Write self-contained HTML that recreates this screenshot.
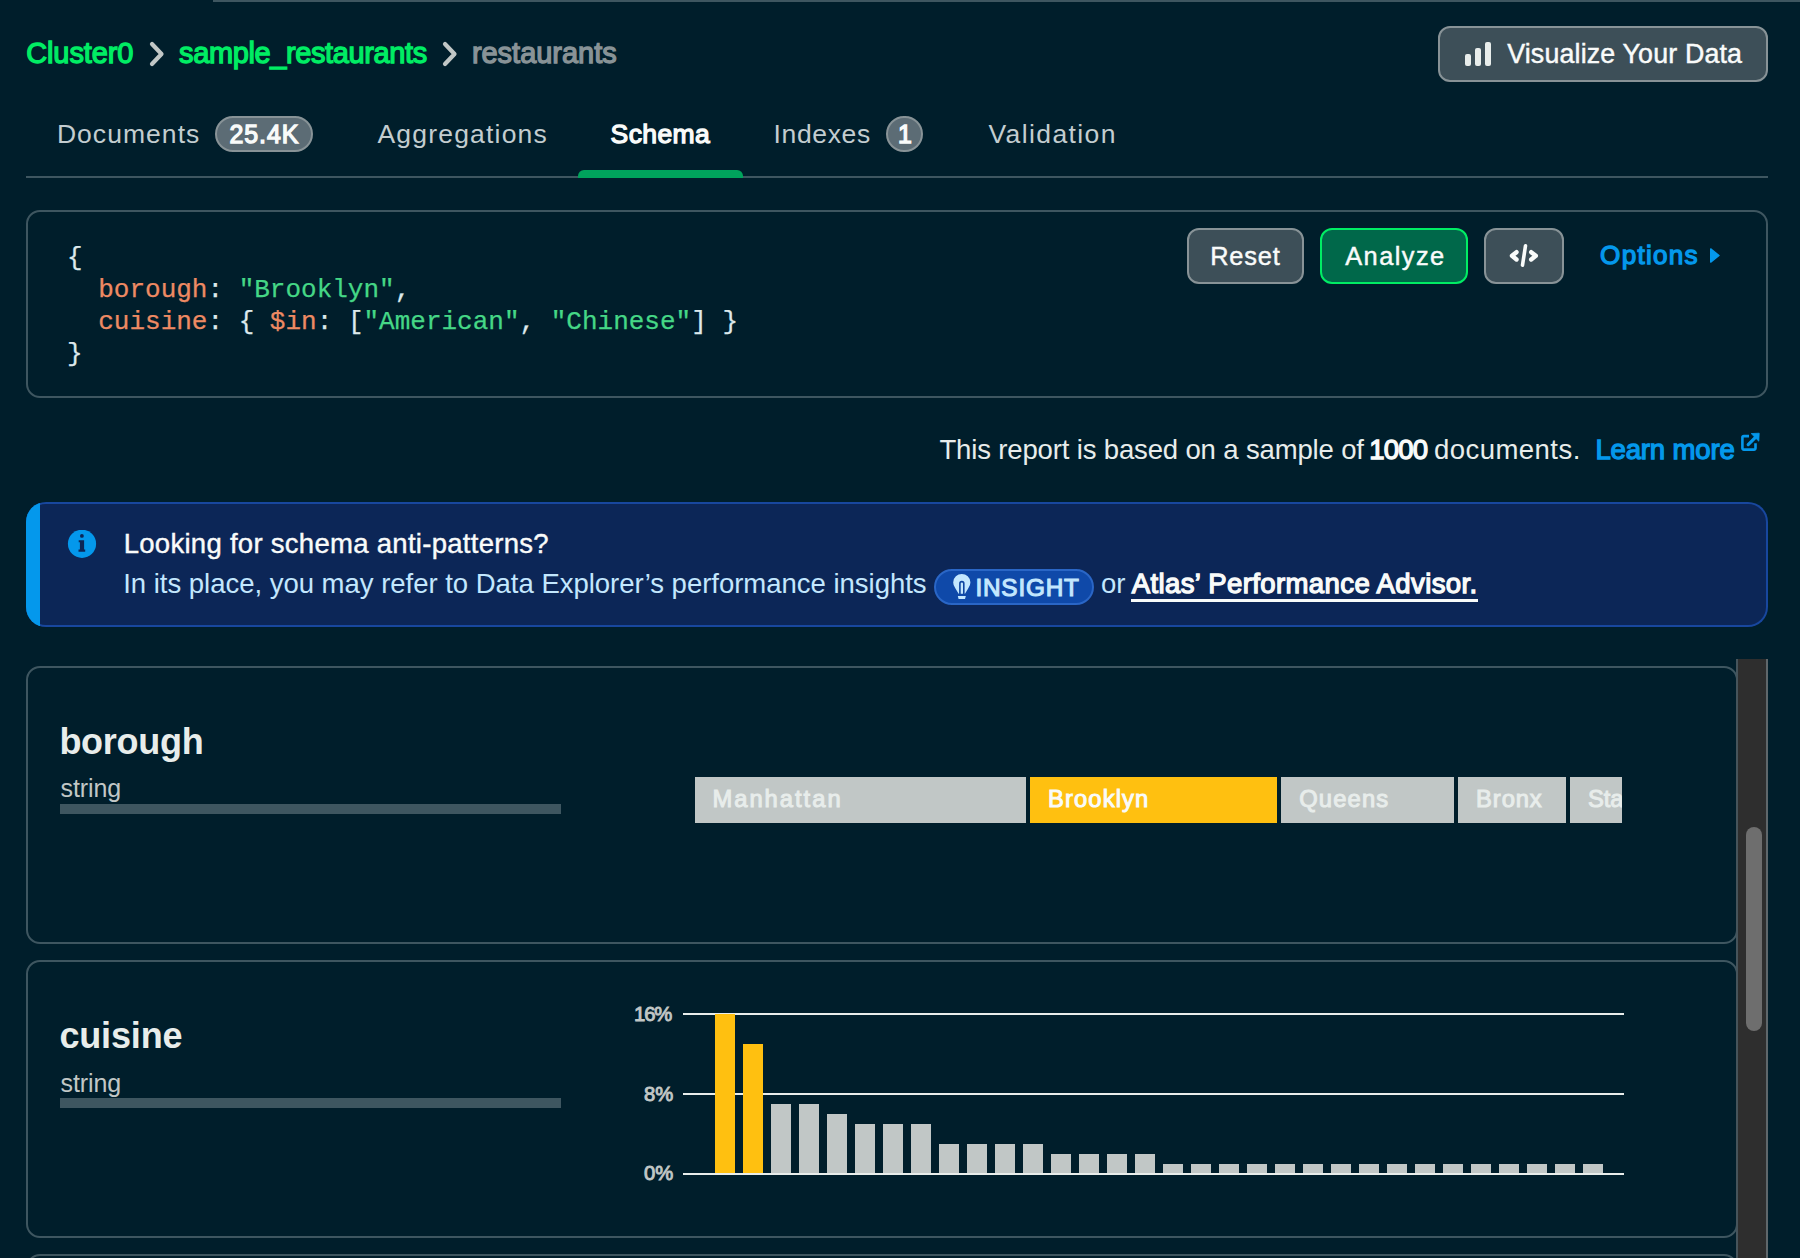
<!DOCTYPE html>
<html><head><meta charset="utf-8">
<style>
html,body{margin:0;padding:0}
body{width:1800px;height:1258px;overflow:hidden;background:#001E2B;position:relative;font-family:"Liberation Sans",sans-serif}
.a{position:absolute;box-sizing:border-box}
.t{position:absolute;white-space:pre;font-family:"Liberation Sans",sans-serif}
.code{position:absolute;white-space:pre;font-family:"Liberation Mono",monospace;font-size:26px;line-height:32px;color:#DDE9EC;-webkit-text-stroke:0.25px currentColor}
.k{color:#EE8A63}.s{color:#45D786}
.bar{position:absolute;width:20px;background:#C1C7C6;bottom:85px}
.y{background:#FFC010}
</style></head><body>
<!-- top line -->
<div class="a" style="left:213px;top:0;width:1587px;height:2px;background:#3E5660"></div>

<!-- breadcrumb chevrons -->
<svg class="a" style="left:146px;top:38px" width="22" height="32" viewBox="0 0 22 32"><path d="M6 6 L15.5 16 L6 26" fill="none" stroke="#C1C7C6" stroke-width="4.2" stroke-linecap="round" stroke-linejoin="round"/></svg>
<svg class="a" style="left:439px;top:38px" width="22" height="32" viewBox="0 0 22 32"><path d="M6 6 L15.5 16 L6 26" fill="none" stroke="#C1C7C6" stroke-width="4.2" stroke-linecap="round" stroke-linejoin="round"/></svg>

<!-- visualize button -->
<div class="a" style="left:1438px;top:26px;width:330px;height:56px;border:2px solid #889397;border-radius:12px;background:#3D4F58"></div>
<div class="a" style="left:1465px;top:54px;width:6px;height:12px;border-radius:2px;background:#E8EDEB"></div>
<div class="a" style="left:1475px;top:48px;width:6px;height:18px;border-radius:2px;background:#E8EDEB"></div>
<div class="a" style="left:1485px;top:42px;width:6px;height:24px;border-radius:2px;background:#E8EDEB"></div>

<!-- tabs -->
<div class="a" style="left:215px;top:116px;width:98px;height:36px;border:2px solid #889397;border-radius:18px;background:#5C6C75"></div>
<div class="a" style="left:886px;top:116px;width:37px;height:36px;border:2px solid #889397;border-radius:18px;background:#5C6C75"></div>
<div class="a" style="left:26px;top:176px;width:1742px;height:2px;background:#3E5660"></div>
<div class="a" style="left:578px;top:170px;width:165px;height:8px;border-radius:6px 6px 0 0;background:#00A35C"></div>

<!-- query bar -->
<div class="a" style="left:26px;top:210px;width:1742px;height:188px;border:2px solid #3E5660;border-radius:14px"></div>
<div class="code" style="left:67px;top:242px">{
  <span class="k">borough</span>: <span class="s">"Brooklyn"</span>,
  <span class="k">cuisine</span>: { <span class="k">$in</span>: [<span class="s">"American"</span>, <span class="s">"Chinese"</span>] }
}</div>
<div class="a" style="left:1187px;top:228px;width:117px;height:56px;border:2px solid #889397;border-radius:12px;background:#3D4F58"></div>
<div class="a" style="left:1320px;top:228px;width:148px;height:56px;border:2px solid #00ED64;border-radius:12px;background:#00684A"></div>
<div class="a" style="left:1484px;top:228px;width:80px;height:56px;border:2px solid #889397;border-radius:12px;background:#3D4F58"></div>
<svg class="a" style="left:1506px;top:240px" width="36" height="32" viewBox="0 0 36 32">
 <path d="M10.5 12.2 L6 15.8 L10.5 19.5 M25.2 12.2 L29.8 15.8 L25.2 19.5" fill="none" stroke="#F9FBFA" stroke-width="4.4" stroke-linecap="round" stroke-linejoin="round"/>
 <path d="M19.5 5.8 L16.5 25.2" fill="none" stroke="#F9FBFA" stroke-width="3.6" stroke-linecap="round"/>
</svg>
<svg class="a" style="left:1708px;top:246px" width="14" height="20" viewBox="0 0 14 20"><path d="M2.7 2.9 L11 9.5 L2.7 16.1 Z" fill="#0498EC" stroke="#0498EC" stroke-width="1.4" stroke-linejoin="round"/></svg>

<!-- learn more icon -->
<svg class="a" style="left:1739px;top:432px" width="22" height="20" viewBox="0 0 22 20">
 <path d="M10 4.1 H4.9 Q3.4 4.1 3.4 5.6 V16.1 Q3.4 17.6 4.9 17.6 H15 Q16.5 17.6 16.5 16.1 V11.2" fill="none" stroke="#0498EC" stroke-width="2.6"/>
 <path d="M9.2 12.6 L16.2 5.6" fill="none" stroke="#0498EC" stroke-width="3.2" stroke-linecap="round"/>
 <path d="M20.2 1.2 L12.2 1.6 L19.8 9.2 Z" fill="#0498EC" stroke="#0498EC" stroke-width="0.8" stroke-linejoin="round"/>
</svg>

<!-- banner -->
<div class="a" style="left:26px;top:502px;width:1742px;height:125px;border-radius:20px;background:#18479E;overflow:hidden">
 <div class="a" style="left:2px;top:2px;width:1738px;height:121px;border-radius:18px;background:#0C2657"></div>
 <div class="a" style="left:0;top:0;width:14px;height:125px;background:#0498EC"></div>
</div>
<svg class="a" style="left:67px;top:530px" width="30" height="30" viewBox="0 0 30 30">
 <circle cx="15" cy="13.8" r="14.1" fill="#0498EC"/>
 <circle cx="14.9" cy="5.9" r="1.9" fill="#0C2657"/>
 <path d="M11.7 10.2 H17.1 V19.6 H18.2 V21.7 H11.5 V19.6 H12.9 V12.2 H11.7 Z" fill="#0C2657"/>
</svg>
<div class="a" style="left:934px;top:569px;width:160px;height:36px;border:2px solid #2A66C6;border-radius:18px;background:#0F49A9"></div>
<svg class="a" style="left:952px;top:573px" width="20" height="28" viewBox="0 0 20 28">
 <path d="M6.6 20.8 L3.3 15.2 A8.6 8.6 0 1 1 16.3 15.2 L13 20.8 Z" fill="#C3E7FE"/>
 <path d="M7.9 21 V10.6 A1.95 1.95 0 0 1 11.8 10.6 V21" fill="none" stroke="#0E45A0" stroke-width="1.6"/>
 <path d="M5.8 23 H13.8 L13 25.9 H6.6 Z" fill="#C3E7FE"/>
</svg>
<div class="a" style="left:1131px;top:599px;width:347px;height:3px;background:#F9FBFA"></div>

<!-- cards -->
<div class="a" style="left:26px;top:666px;width:1712px;height:278px;border:2px solid #3E5660;border-radius:14px"></div>
<div class="a" style="left:26px;top:960px;width:1712px;height:278px;border:2px solid #3E5660;border-radius:14px"></div>
<div class="a" style="left:26px;top:1254px;width:1712px;height:278px;border:2px solid #3E5660;border-radius:14px"></div>
<div class="a" style="left:60px;top:804px;width:501px;height:10px;background:#3E5660"></div>
<div class="a" style="left:60px;top:1098px;width:501px;height:10px;background:#3E5660"></div>

<!-- borough segments -->
<div class="a" style="left:695px;top:777px;width:331px;height:46px;background:#C1C7C6"></div>
<div class="a" style="left:1030px;top:777px;width:247px;height:46px;background:#FFC010"></div>
<div class="a" style="left:1281px;top:777px;width:173px;height:46px;background:#C1C7C6"></div>
<div class="a" style="left:1458px;top:777px;width:108px;height:46px;background:#C1C7C6"></div>
<div class="a" style="left:1570px;top:777px;width:52px;height:46px;background:#C1C7C6;overflow:hidden"></div>

<!-- chart -->
<div class="a" style="left:683px;top:1013px;width:941px;height:2px;background:#E8EDEB"></div>
<div class="a" style="left:683px;top:1093px;width:941px;height:2px;background:#E8EDEB"></div>
<div class="a" style="left:683px;top:1173px;width:941px;height:2px;background:#E8EDEB"></div>
<div class="a" style="left:715px;top:1014px;width:20px;height:159px;background:#FFC010"></div>
<div class="a" style="left:743px;top:1044px;width:20px;height:129px;background:#FFC010"></div>
<div class="a" style="left:771px;top:1104px;width:20px;height:69px;background:#C1C7C6"></div>
<div class="a" style="left:799px;top:1104px;width:20px;height:69px;background:#C1C7C6"></div>
<div class="a" style="left:827px;top:1114px;width:20px;height:59px;background:#C1C7C6"></div>
<div class="a" style="left:855px;top:1124px;width:20px;height:49px;background:#C1C7C6"></div>
<div class="a" style="left:883px;top:1124px;width:20px;height:49px;background:#C1C7C6"></div>
<div class="a" style="left:911px;top:1124px;width:20px;height:49px;background:#C1C7C6"></div>
<div class="a" style="left:939px;top:1144px;width:20px;height:29px;background:#C1C7C6"></div>
<div class="a" style="left:967px;top:1144px;width:20px;height:29px;background:#C1C7C6"></div>
<div class="a" style="left:995px;top:1144px;width:20px;height:29px;background:#C1C7C6"></div>
<div class="a" style="left:1023px;top:1144px;width:20px;height:29px;background:#C1C7C6"></div>
<div class="a" style="left:1051px;top:1154px;width:20px;height:19px;background:#C1C7C6"></div>
<div class="a" style="left:1079px;top:1154px;width:20px;height:19px;background:#C1C7C6"></div>
<div class="a" style="left:1107px;top:1154px;width:20px;height:19px;background:#C1C7C6"></div>
<div class="a" style="left:1135px;top:1154px;width:20px;height:19px;background:#C1C7C6"></div>
<div class="a" style="left:1163px;top:1164px;width:20px;height:9px;background:#C1C7C6"></div>
<div class="a" style="left:1191px;top:1164px;width:20px;height:9px;background:#C1C7C6"></div>
<div class="a" style="left:1219px;top:1164px;width:20px;height:9px;background:#C1C7C6"></div>
<div class="a" style="left:1247px;top:1164px;width:20px;height:9px;background:#C1C7C6"></div>
<div class="a" style="left:1275px;top:1164px;width:20px;height:9px;background:#C1C7C6"></div>
<div class="a" style="left:1303px;top:1164px;width:20px;height:9px;background:#C1C7C6"></div>
<div class="a" style="left:1331px;top:1164px;width:20px;height:9px;background:#C1C7C6"></div>
<div class="a" style="left:1359px;top:1164px;width:20px;height:9px;background:#C1C7C6"></div>
<div class="a" style="left:1387px;top:1164px;width:20px;height:9px;background:#C1C7C6"></div>
<div class="a" style="left:1415px;top:1164px;width:20px;height:9px;background:#C1C7C6"></div>
<div class="a" style="left:1443px;top:1164px;width:20px;height:9px;background:#C1C7C6"></div>
<div class="a" style="left:1471px;top:1164px;width:20px;height:9px;background:#C1C7C6"></div>
<div class="a" style="left:1499px;top:1164px;width:20px;height:9px;background:#C1C7C6"></div>
<div class="a" style="left:1527px;top:1164px;width:20px;height:9px;background:#C1C7C6"></div>
<div class="a" style="left:1555px;top:1164px;width:20px;height:9px;background:#C1C7C6"></div>
<div class="a" style="left:1583px;top:1164px;width:20px;height:9px;background:#C1C7C6"></div>

<!-- scrollbar -->
<div class="a" style="left:1736px;top:659px;width:32px;height:600px;background:#2E2E2E;border-left:2px solid #46545B;border-right:2px solid #5F676B"></div>
<div class="a" style="left:1746px;top:827px;width:16px;height:204px;border-radius:8px;background:#6E6E6E"></div>

<div class="t" style="left:26.2px;top:36.4px;font-size:28.99px;line-height:35px;font-weight:normal;color:#00ED64;letter-spacing:-0.10px;-webkit-text-stroke:1.3px #00ED64">Cluster0</div>
<div class="t" style="left:179.1px;top:36.4px;font-size:28.99px;line-height:35px;font-weight:normal;color:#00ED64;letter-spacing:-0.38px;-webkit-text-stroke:1.3px #00ED64">sample_restaurants</div>
<div class="t" style="left:471.9px;top:36.4px;font-size:28.99px;line-height:35px;font-weight:normal;color:#889397;letter-spacing:-0.02px;-webkit-text-stroke:1.3px #889397">restaurants</div>
<div class="t" style="left:1507.2px;top:37.9px;font-size:26.81px;line-height:32px;font-weight:normal;color:#F9FBFA;letter-spacing:0.16px;-webkit-text-stroke:0.45px #F9FBFA">Visualize Your Data</div>
<div class="t" style="left:56.9px;top:117.7px;font-size:26.52px;line-height:32px;font-weight:normal;color:#C3CDD0;letter-spacing:1.04px">Documents</div>
<div class="t" style="left:229.4px;top:119.3px;font-size:24.93px;line-height:30px;font-weight:normal;color:#F9FBFA;letter-spacing:0.99px;-webkit-text-stroke:1.3px #F9FBFA">25.4K</div>
<div class="t" style="left:377.5px;top:117.7px;font-size:26.52px;line-height:32px;font-weight:normal;color:#C3CDD0;letter-spacing:1.18px">Aggregations</div>
<div class="t" style="left:610.6px;top:117.7px;font-size:26.52px;line-height:32px;font-weight:normal;color:#F9FBFA;letter-spacing:0.37px;-webkit-text-stroke:1.3px #F9FBFA">Schema</div>
<div class="t" style="left:773.6px;top:117.7px;font-size:26.52px;line-height:32px;font-weight:normal;color:#C3CDD0;letter-spacing:0.63px">Indexes</div>
<div class="t" style="left:897.9px;top:119.3px;font-size:24.93px;line-height:30px;font-weight:normal;color:#F9FBFA;letter-spacing:0.00px;-webkit-text-stroke:1.3px #F9FBFA">1</div>
<div class="t" style="left:988.5px;top:117.7px;font-size:26.52px;line-height:32px;font-weight:normal;color:#C3CDD0;letter-spacing:1.39px">Validation</div>
<div class="t" style="left:1210.2px;top:241.1px;font-size:25.36px;line-height:30px;font-weight:normal;color:#F9FBFA;letter-spacing:0.82px;-webkit-text-stroke:0.45px #F9FBFA">Reset</div>
<div class="t" style="left:1345.2px;top:241.1px;font-size:25.36px;line-height:30px;font-weight:normal;color:#F9FBFA;letter-spacing:1.46px;-webkit-text-stroke:0.45px #F9FBFA">Analyze</div>
<div class="t" style="left:1600.1px;top:240.1px;font-size:26.09px;line-height:31px;font-weight:normal;color:#0498EC;letter-spacing:1.27px;-webkit-text-stroke:1.3px #0498EC">Options</div>
<div class="t" style="left:939.4px;top:433.1px;font-size:27.54px;line-height:33px;font-weight:normal;color:#E8EDEB;letter-spacing:-0.16px">This report is based on a sample of</div>
<div class="t" style="left:1369.2px;top:433.1px;font-size:27.54px;line-height:33px;font-weight:normal;color:#F9FBFA;letter-spacing:-0.81px;-webkit-text-stroke:1.3px #F9FBFA">1000</div>
<div class="t" style="left:1433.9px;top:433.1px;font-size:27.54px;line-height:33px;font-weight:normal;color:#E8EDEB;letter-spacing:0.46px">documents.</div>
<div class="t" style="left:1595.4px;top:433.1px;font-size:27.54px;line-height:33px;font-weight:normal;color:#0498EC;letter-spacing:-0.16px;-webkit-text-stroke:1.3px #0498EC">Learn more</div>
<div class="t" style="left:123.7px;top:526.9px;font-size:27.54px;line-height:33px;font-weight:normal;color:#F9FBFA;letter-spacing:0.27px;-webkit-text-stroke:0.4px #F9FBFA">Looking for schema anti-patterns?</div>
<div class="t" style="left:123.2px;top:566.9px;font-size:27.54px;line-height:33px;font-weight:normal;color:#C3E7FE;letter-spacing:-0.03px">In its place, you may refer to Data Explorer’s performance insights</div>
<div class="t" style="left:975.4px;top:572.8px;font-size:24.35px;line-height:29px;font-weight:normal;color:#C3E7FE;letter-spacing:0.81px;-webkit-text-stroke:1.1px #C3E7FE">INSIGHT</div>
<div class="t" style="left:1100.9px;top:566.9px;font-size:27.54px;line-height:33px;font-weight:normal;color:#C3E7FE;letter-spacing:-0.02px">or</div>
<div class="t" style="left:1131.7px;top:566.9px;font-size:27.54px;line-height:33px;font-weight:normal;color:#F9FBFA;letter-spacing:0.38px;-webkit-text-stroke:1.3px #F9FBFA">Atlas’ Performance Advisor.</div>
<div class="t" style="left:59.4px;top:719.9px;font-size:36.00px;line-height:43px;font-weight:bold;color:#E8EDEB;letter-spacing:-0.28px">borough</div>
<div class="t" style="left:60.5px;top:773.2px;font-size:25.00px;line-height:30px;font-weight:normal;color:#C1C7C6;letter-spacing:-0.11px">string</div>
<div class="t" style="left:59.4px;top:1013.9px;font-size:36.00px;line-height:43px;font-weight:bold;color:#E8EDEB;letter-spacing:-0.15px">cuisine</div>
<div class="t" style="left:60.5px;top:1067.8px;font-size:25.00px;line-height:30px;font-weight:normal;color:#C1C7C6;letter-spacing:-0.11px">string</div>
<div class="t" style="left:712.4px;top:784.1px;font-size:23.77px;line-height:29px;font-weight:normal;color:#E8EDEB;letter-spacing:1.99px;-webkit-text-stroke:1.0px #E8EDEB">Manhattan</div>
<div class="t" style="left:1047.9px;top:784.1px;font-size:23.77px;line-height:29px;font-weight:normal;color:#F9FBFA;letter-spacing:1.14px;-webkit-text-stroke:1.0px #F9FBFA">Brooklyn</div>
<div class="t" style="left:1299.2px;top:784.1px;font-size:23.77px;line-height:29px;font-weight:normal;color:#E8EDEB;letter-spacing:1.14px;-webkit-text-stroke:1.0px #E8EDEB">Queens</div>
<div class="t" style="left:1476.1px;top:784.1px;font-size:23.77px;line-height:29px;font-weight:normal;color:#E8EDEB;letter-spacing:0.89px;-webkit-text-stroke:1.0px #E8EDEB">Bronx</div>
<div class="a" style="left:1570px;top:777px;width:52px;height:46px;overflow:hidden"><div class="a" style="left:-1570px;top:-777px;width:1800px;height:1258px"><div class="t" style="left:1587.9px;top:784.1px;font-size:23.77px;line-height:29px;font-weight:normal;color:#E8EDEB;letter-spacing:0.00px;-webkit-text-stroke:1.0px #E8EDEB">Staten Island</div></div></div>
<div class="t" style="left:634.0px;top:1001.6px;font-size:20.29px;line-height:24px;font-weight:normal;color:#C1C7C6;letter-spacing:-1.10px;-webkit-text-stroke:0.9px #C1C7C6">16%</div>
<div class="t" style="left:644.0px;top:1081.6px;font-size:20.29px;line-height:24px;font-weight:normal;color:#C1C7C6;letter-spacing:0.00px;-webkit-text-stroke:0.9px #C1C7C6">8%</div>
<div class="t" style="left:644.0px;top:1161.2px;font-size:20.29px;line-height:24px;font-weight:normal;color:#C1C7C6;letter-spacing:0.00px;-webkit-text-stroke:0.9px #C1C7C6">0%</div>
</body></html>
